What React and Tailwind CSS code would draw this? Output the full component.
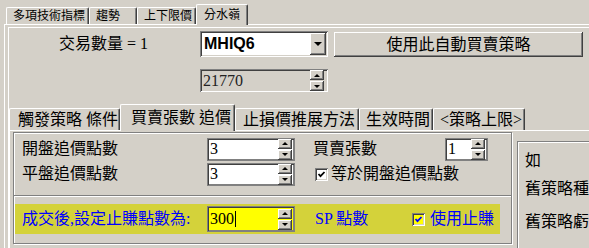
const raised = "shadow-[inset_-1px_-1px_0_#404040,inset_1px_1px_0_#ffffff,inset_-2px_-2px_0_#808080,inset_2px_2px_0_#d4d0c8]";
const raisedSmall = "shadow-[inset_-1px_-1px_0_#404040,inset_1px_1px_0_#ffffff,inset_-2px_-2px_0_#808080]";
const sunken = "shadow-[inset_1px_1px_0_#808080,inset_-1px_-1px_0_#ffffff,inset_2px_2px_0_#404040,inset_-2px_-2px_0_#d4d0c8]";
const darkBox = "shadow-[inset_0_0_0_1px_#808080,inset_2px_2px_0_#404040,inset_-2px_-2px_0_#808080]";
const etched = "border border-[#808080] shadow-[inset_1px_1px_0_#ffffff,1px_1px_0_#ffffff]";

const Tab = ({ children, w, pl, selected, small }) => (
  <div
    style={{ width: w, paddingLeft: pl }}
    className={`bg-[#d4d0c8] border-l border-t border-r border-white border-r-[#404040] rounded-t-[2px] shadow-[inset_-1px_0_0_#808080] whitespace-nowrap flex items-center ${
      small
        ? selected ? "h-[21px] -mb-px relative z-10 text-[12px]" : "h-[17px] text-[12px]"
        : selected ? "h-[27px] -mb-px relative z-10 text-[16px]" : "h-[22px] text-[16px]"
    }`}
  >
    {children}
  </div>
);

const Arrow = ({ up }) =>
  up ? (
    <div className="w-0 h-0 border-x-[3px] border-x-transparent border-b-[3px] border-b-black" />
  ) : (
    <div className="w-0 h-0 border-x-[3px] border-x-transparent border-t-[3px] border-t-black" />
  );

const SpinButtons = () => (
  <div className="flex flex-col gap-[1px]">
    <div className={`w-[14px] h-[10px] bg-[#d4d0c8] flex items-center justify-center ${raisedSmall}`}>
      <Arrow up />
    </div>
    <div className={`w-[14px] h-[10px] bg-[#d4d0c8] flex items-center justify-center ${raisedSmall}`}>
      <Arrow />
    </div>
  </div>
);

const Spin = ({ value, w, h = 23, bg = "bg-white", text = "text-black", caret }) => (
  <div style={{ width: w, height: h }} className={`${bg} ${darkBox} flex items-center justify-between pl-[3px] pr-[3px] shrink-0`}>
    <span className={`text-[16px] leading-none ${text} flex items-center`}>
      {value}
      {caret && <span className="inline-block w-px h-[16px] bg-black ml-px" />}
    </span>
    <SpinButtons />
  </div>
);

const CheckBox = ({ color = "#000000", bg = "bg-white" }) => (
  <div className={`w-[13px] h-[13px] ${bg} ${sunken} flex items-center justify-center shrink-0`}>
    <svg width="9" height="9" viewBox="0 0 9 9">
      <polyline points="1.5,4 3.5,6.2 7.5,2" fill="none" stroke={color} strokeWidth="1.8" />
    </svg>
  </div>
);

export default function App() {
  return (
    <div className="w-[589px] h-[248px] overflow-hidden bg-[#d4d0c8] flex flex-col font-['Liberation_Serif','Noto_Sans_CJK_TC',serif] text-black">
      {/* top tabs */}
      <div className="h-[24px] shrink-0 flex items-end pl-[6px]">
        <Tab small w={83} pl={6}>多項技術指標</Tab>
        <Tab small w={48} pl={6}>趨勢</Tab>
        <Tab small w={59} pl={6}>上下限價</Tab>
        <Tab small selected w={52} pl={7}>分水嶺</Tab>
      </div>

      <div className="ml-[4px] flex-1 border-t border-l border-white flex flex-col">
        <div className="ml-[3px] mt-[2px] flex-1 border-t border-l border-white flex flex-col">
          {/* quantity row */}
          <div className="flex items-start mt-[3px]">
            <div className="w-[191px] h-[26px] pl-[50px] flex items-center text-[16px] whitespace-nowrap">交易數量 = 1</div>
            <div className={`w-[128px] h-[26px] bg-white ${sunken} flex items-center justify-between pl-[4px] pr-[2px] shrink-0`}>
              <span className="font-['Liberation_Sans',sans-serif] font-bold text-[16px] leading-none">MHIQ6</span>
              <div className={`w-[16px] h-[22px] bg-[#d4d0c8] ${raised} flex items-center justify-center`}>
                <div className="w-0 h-0 border-x-[4px] border-x-transparent border-t-[4px] border-t-black" />
              </div>
            </div>
            <div className={`ml-[6px] mt-px w-[249px] h-[25px] bg-[#d4d0c8] ${raised} flex items-center justify-center text-[16px]`}>
              使用此自動買賣策略
            </div>
          </div>

          <div className="flex mt-[12px] pl-[191px]">
            <div className={`w-[128px] h-[23px] bg-[#d4d0c8] ${sunken} flex items-center justify-between pl-[3px] pr-[4px]`}>
              <span className="text-[16px] leading-none text-[#222]">21770</span>
              <SpinButtons />
            </div>
          </div>

          {/* second tab control */}
          <div className="mt-[12px] h-[26px] shrink-0 flex items-end">
            <Tab w={111} pl={8}>觸發策略 條件</Tab>
            <Tab selected w={115} pl={10}>買賣張數 追價</Tab>
            <Tab w={124} pl={7}>止損價推展方法</Tab>
            <Tab w={74} pl={6}>生效時間</Tab>
            <Tab w={92} pl={6}>&lt;策略上限&gt;</Tab>
          </div>

          <div className="flex-1 border-t border-l border-white flex items-start">
            {/* left group */}
            <div className={`ml-[3px] mt-px w-[499px] h-[112px] shrink-0 ${etched} flex flex-col`}>
              <div className="flex items-center mt-[4px]">
                <div className="w-[193px] pl-[8px] text-[16px] whitespace-nowrap">開盤追價點數</div>
                <Spin value="3" w={88} />
                <div className="ml-[18px] w-[132px] text-[16px] whitespace-nowrap">買賣張數</div>
                <Spin value="1" w={43} />
              </div>
              <div className="flex items-center mt-px">
                <div className="w-[193px] pl-[8px] text-[16px] whitespace-nowrap">平盤追價點數</div>
                <Spin value="3" w={88} />
                <div className="ml-[20px]">
                  <CheckBox />
                </div>
                <div className="ml-[3px] text-[16px] whitespace-nowrap">等於開盤追價點數</div>
              </div>

              <div className="mt-[9px] h-[2px] border-t border-[#808080] border-b border-b-white" />

              <div className="mt-[7px] ml-px w-[485px] h-[30px] bg-[#d4d23a] flex items-center text-[#0000ff] text-[16px]">
                <div className="w-[192px] pl-[7px] whitespace-nowrap">成交後,設定止賺點數為:</div>
                <Spin value="300" w={88} h={26} bg="bg-[#ffff00]" caret />
                <div className="ml-[20px] w-[97px] whitespace-nowrap">SP 點數</div>
                <CheckBox color="#0000ff" bg="bg-[#ffff00]" />
                <div className="ml-[5px] whitespace-nowrap">使用止賺</div>
              </div>
            </div>

            {/* right group */}
            <div className={`ml-[5px] mt-[10px] w-[100px] h-[140px] shrink-0 ${etched} flex flex-col pl-[7px] text-[16px] whitespace-nowrap leading-[18px]`}>
              <div className="mt-[10px]">如</div>
              <div className="mt-[10px]">舊策略種</div>
              <div className="mt-[15px]">舊策略虧</div>
            </div>
          </div>
        </div>
      </div>
    </div>
  );
}
